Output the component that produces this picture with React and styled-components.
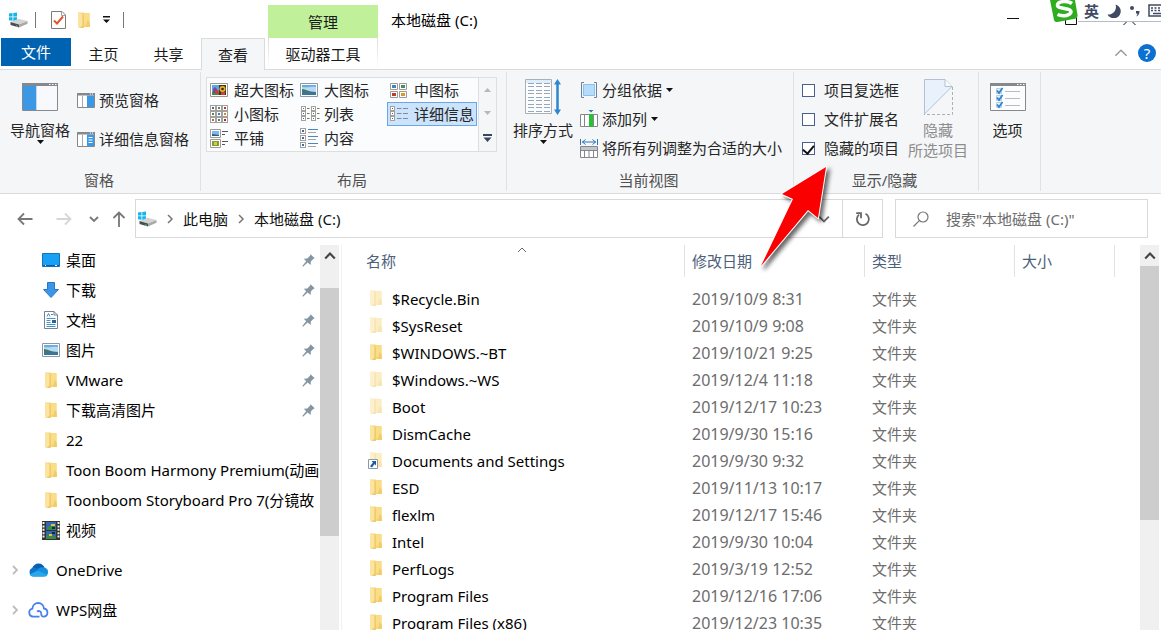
import React from 'react'
import styled, { createGlobalStyle, css } from 'styled-components'

const GlobalStyle = createGlobalStyle`
  * {
    box-sizing: border-box;
  }

  body {
    margin: 0;
    background: #fff;
    color: #1a1a1a;
    font-family: 'Noto Sans', 'Noto Sans CJK SC', sans-serif;
    font-size: 15px;
    line-height: 20px;
  }

  button,
  input {
    font: inherit;
    color: inherit;
  }

  button {
    margin: 0;
    padding: 0;
    border: none;
    background: none;
    white-space: nowrap;
  }

  svg {
    display: block;
    flex: none;
  }
`

const Explorer = styled.div`
  position: relative;
  display: flex;
  flex-direction: column;
  height: 100vh;
  overflow: hidden;
`

/* ---------- title bar ---------- */

const TitleBar = styled.header`
  display: flex;
  align-items: flex-end;
  height: 38px;
`

const QuickAccess = styled.div`
  display: flex;
  align-items: center;
  width: 268px;
  height: 36px;
  padding-left: 8px;
`

const QuickButton = styled.button`
  display: flex;
  margin-left: ${(p) => p.$gap || 12}px;
`

const QuickDivider = styled.div`
  width: 1px;
  height: 16px;
  margin-left: ${(p) => p.$gap || 12}px;
  background: #777;
`

const ContextLabel = styled.div`
  width: 110px;
  height: 33px;
  line-height: 34px;
  text-align: center;
  background: #c0f09a;
`

const WindowTitle = styled.h1`
  flex: 1;
  margin: 0;
  padding-left: 13px;
  font-size: 15px;
  font-weight: normal;
  line-height: 36px;
  color: #000;
`

const WindowButtons = styled.div`
  display: flex;
  align-items: center;
  gap: 46px;
  height: 38px;
  padding-right: 25px;
`

/* ---------- ribbon tabs ---------- */

const TabRow = styled.nav`
  display: flex;
  align-items: stretch;
  height: 32px;
  padding-left: 1px;
  border-bottom: 1px solid #dadbdc;
`

const Tab = styled.button`
  width: ${(p) => p.$width || 65}px;
  height: 31px;
  line-height: 30px;

  ${(p) =>
    p.$file &&
    css`
      height: 28px;
      line-height: 28px;
      color: #fff;
      background: #0063b1;
    `}

  ${(p) =>
    p.$active &&
    css`
      height: 32px;
      border: 1px solid #dadbdc;
      border-bottom: none;
      line-height: 28px;
      background: #f4f6f8;
    `}

  ${(p) =>
    p.$context &&
    css`
      margin-left: 3px;
      border: 1px solid;
      border-width: 0 1px;
      border-image: linear-gradient(#dadbdc, #fff) 1;
    `}
`

const TabTools = styled.div`
  display: flex;
  align-items: center;
  gap: 10px;
  height: 30px;
  margin-left: auto;
  padding-right: 5px;
`

const HelpButton = styled.button`
  width: 18px;
  height: 18px;
  border-radius: 50%;
  background: #0b70cf;
  color: #fff;
  line-height: 18px;
`

/* ---------- ribbon ---------- */

const Ribbon = styled.section`
  display: flex;
  height: 124px;
  padding: 2px 0 2px 1px;
  background: #f4f6f8;
  border-bottom: 1px solid #dadbdc;
`

const Group = styled.div`
  display: flex;
  flex-direction: column;
  width: ${(p) => p.$width}px;
  border-right: 1px solid #dfe1e3;
`

const GroupBody = styled.div`
  display: flex;
  flex: 1;
  padding: ${(p) => p.$pad || '0'};
`

const GroupLabel = styled.div`
  height: 20px;
  margin-bottom: 1px;
  padding-right: 3px;
  color: #505050;
  text-align: center;
`

const BigButton = styled.button`
  display: flex;
  flex-direction: column;
  align-items: center;
  width: ${(p) => p.$width}px;
  padding-top: 7px;
  line-height: 20px;
  color: ${(p) => (p.disabled ? '#8d8d8d' : '#262626')};
`

const BigIcon = styled.span`
  height: 41px;
  padding-top: ${(p) => (p.$tall ? 0 : 4)}px;
`

const SmallStack = styled.div`
  display: flex;
  flex-direction: column;
  gap: ${(p) => p.$gap}px;
  padding: ${(p) => p.$top}px 0 0 2px;
`

const SmallButton = styled.button`
  display: flex;
  align-items: center;
  gap: 4px;
  height: 20px;
  color: #262626;
`

const Gallery = styled.div`
  display: flex;
  height: 75px;
  border: 1px solid #dcdfe2;
  background: #fafcfe;
`

const GalleryGrid = styled.div`
  display: grid;
  grid-template-columns: repeat(3, 90px);
  grid-template-rows: repeat(3, 24px);
`

const GalleryItem = styled.button`
  display: flex;
  align-items: center;
  padding-left: 2px;
  color: #262626;
  border: 1px solid transparent;

  ${(p) =>
    p.$active &&
    css`
      background: #cbe3fb;
      border-color: #6da6e8;
    `}
`

const GalleryIcon = styled.span`
  width: 24px;
`

const GalleryScroll = styled.div`
  display: flex;
  flex-direction: column;
  justify-content: space-around;
  align-items: center;
  width: 18px;
  margin-left: 1px;
  border-left: 1px solid #dcdfe2;
  background: #f4f6f8;
`

const CheckStack = styled.div`
  display: flex;
  flex-direction: column;
  gap: 9px;
  width: 98px;
  padding-top: 8px;
  white-space: nowrap;
`

const CheckLabel = styled.label`
  display: flex;
  align-items: center;
  gap: 9px;
  height: 20px;
  color: #262626;
`

const Checkbox = styled.input`
  appearance: none;
  display: flex;
  justify-content: center;
  width: 13px;
  height: 13px;
  margin: 0;
  border: 1px solid #4a5f8c;
  background: #fff;

  &:checked::after {
    content: '';
    width: 5px;
    height: 9px;
    border: solid #111;
    border-width: 0 2px 2px 0;
    transform: rotate(40deg);
  }
`

/* ---------- address bar ---------- */

const AddressRow = styled.div`
  display: flex;
  align-items: center;
  padding: 5px 13px 7px 17px;
`

const NavButtons = styled.div`
  display: flex;
  align-items: center;
  width: 118px;
`

const NavButton = styled.button`
  display: flex;
  margin-right: ${(p) => p.$gap || 0}px;
`

const AddressBox = styled.div`
  display: flex;
  align-items: center;
  flex: 1;
  height: 39px;
  padding-left: 1px;
  border: 1px solid #d9d9d9;
`

const Crumb = styled.button`
  height: 22px;
  line-height: 20px;
  color: #111;
`

const CrumbArrow = styled.span`
  display: flex;
  justify-content: center;
  width: 26px;
`

const AddressEnd = styled.div`
  display: flex;
  align-items: center;
  align-self: stretch;
  margin-left: auto;
`

const RefreshButton = styled.button`
  display: flex;
  align-items: center;
  justify-content: center;
  align-self: stretch;
  width: 40px;
  margin-left: 12px;
  border-left: 1px solid #d9d9d9;
`

const SearchBox = styled.label`
  display: flex;
  align-items: center;
  gap: 17px;
  width: 253px;
  height: 39px;
  margin-left: 12px;
  padding-left: 17px;
  border: 1px solid #d9d9d9;
`

const SearchInput = styled.input`
  flex: 1;
  min-width: 0;
  padding: 0;
  border: none;
  outline: none;
  background: none;

  &::placeholder {
    color: #6d6d6d;
    opacity: 1;
  }
`

/* ---------- panes ---------- */

const Panes = styled.main`
  display: flex;
  flex: 1;
  min-height: 0;
  padding-right: 2px;
`

const Sidebar = styled.nav`
  width: 320px;
  overflow: hidden;
`

const SideItem = styled.a`
  display: flex;
  align-items: center;
  height: 30px;
  padding-left: ${(p) => (p.$root ? 10 : 41)}px;
  margin-top: ${(p) => (p.$root ? 10 : 0)}px;
  color: #000;
  text-decoration: none;
  white-space: nowrap;
`

const SideIcon = styled.span`
  display: flex;
  justify-content: center;
  flex: none;
  width: ${(p) => p.$width || 20}px;
  margin-right: 5px;
`

const SideText = styled.span`
  flex: 1;
`

const PinSlot = styled.span`
  width: 18px;
`

const ScrollTrack = styled.div`
  display: flex;
  flex-direction: column;
  flex: none;
  width: 19px;
  background: #f0f0f0;
`

const ScrollUp = styled.button`
  display: flex;
  align-items: center;
  justify-content: center;
  height: 21px;
`

const ScrollThumb = styled.div`
  height: ${(p) => p.$size}px;
  margin-top: ${(p) => p.$start}px;
  background: #cdcdcd;
`

const FilePane = styled.section`
  flex: 1;
  min-width: 0;
  overflow: hidden;
  margin-left: 2px;
  border-left: 1px solid #f2f2f2;
`

const FileTable = styled.table`
  width: 100%;
  table-layout: fixed;
  border-collapse: collapse;
`

const HeadCell = styled.th`
  position: relative;
  width: ${(p) => (p.$width ? p.$width + 'px' : 'auto')};
  padding: 0 0 8px;
  font-weight: normal;
  text-align: left;
  color: #4c607a;
`

const HeadText = styled.div`
  height: 32px;
  padding-left: ${(p) => p.$indent || 7}px;
  line-height: 33px;
  border-right: 1px solid #e2e2e2;
`

const SortMark = styled.span`
  position: absolute;
  top: 0;
  left: 51%;
`

const Cell = styled.td`
  height: 27px;
  padding: 0 0 0 7px;
  color: #6d6d6d;
  white-space: nowrap;
`

const DateCell = styled(Cell)`
  font-size: 16px;
`

const FileName = styled.div`
  display: flex;
  align-items: center;
  gap: 10px;
  padding-left: 21px;
  color: #000;
`

/* ---------- overlays ---------- */

const ImeBar = styled.div`
  position: absolute;
  top: 0;
  right: 0;
  display: flex;
  align-items: center;
  width: 83px;
  height: 22px;
  padding-left: 6px;
  gap: 8px;
  background: #fff;
  border-bottom: 1px solid #b4bcc8;
  color: #3f4963;
  font-weight: bold;
  overflow: hidden;
`

const ImeLogo = styled.div`
  position: absolute;
  top: 0;
  right: 83px;
`

const Pointer = styled.svg`
  position: absolute;
  top: 160px;
  left: 750px;
  overflow: visible;
  pointer-events: none;
  filter: drop-shadow(3px 3px 2px rgba(0, 0, 0, 0.6));
`

/* ---------- icons ---------- */

const Chevron = ({ dir = 'down', size = 10, color = '#555', width = 1.5 }) => {
  const paths = {
    down: 'M1 3 L5 7 L9 3',
    up: 'M1 7 L5 3 L9 7',
    right: 'M3 1 L7 5 L3 9',
  }
  return (
    <svg width={size} height={size} viewBox="0 0 10 10" fill="none">
      <path d={paths[dir]} stroke={color} strokeWidth={width} />
    </svg>
  )
}

const Caret = ({ color = '#111', up }) => (
  <svg width="7" height="4" viewBox="0 0 7 4">
    <path d={up ? 'M0 4H7L3.5 0z' : 'M0 0H7L3.5 4z'} fill={color} />
  </svg>
)

const DriveIcon = () => (
  <svg width="20" height="16" viewBox="0 0 20 16">
    <path d="M1 1.500l3.500-.5v3.500H1zM5.300.9L9 .4v4.100H5.300zM1 5.300h3.500v3.500L1 8.300zM5.300 5.300H9v4.100l-3.700-.5z" fill="#13b5ea" />
    <path d="M2.500 10l8-3.200 9 2.200-8.500 3.600z" fill="#d4d4d4" />
    <path d="M2.500 10l8.500 2.600v3L2.500 13z" fill="#4a4e50" />
    <path d="M11 12.600L19.500 9v2.800L11 15.600z" fill="#a9a9a9" />
    <path d="M8 13.300l2 .6v.9l-2-.6z" fill="#5fd26a" />
  </svg>
)

const CheckDocIcon = () => (
  <svg width="15" height="18" viewBox="0 0 15 18">
    <path d="M.5.500H11L14.500 4v13.500H.500z" fill="#fdfdfd" stroke="#7c7c7c" />
    <path d="M10.500.500V4.500h4" fill="none" stroke="#a0a0a0" />
    <path d="M3 9.500l3 3 6-7" fill="none" stroke="#e0552b" strokeWidth="2" />
  </svg>
)

const FolderIcon = ({ faded, link }) => (
  <svg width="12" height="17" viewBox="0 0 12 17" overflow="visible">
    <g opacity={faded ? 0.5 : 1}>
      <path d="M0 .500h5.500l1 .5H11.500v10.500l.5 1v2.500H6v1H2L0 15z" fill="#f6d67c" />
      <path d="M6 1.500h5.500v11H6z" fill="#f9de87" />
      <path d="M0 .500l4.500 1.500v12L2 16 0 15z" fill="#fbe3a0" />
      <path d="M4.500 2L6 2.500v13l-2 .5-2-.5 2.500-2z" fill="#f0ca6c" />
      <path d="M9.500 8l2 2 .5 5H8z" fill="#f4cc66" />
    </g>
    {link && (
      <g>
        <path d="M-1.500 7.500h9v9h-9z" fill="#fff" stroke="#8b98a8" />
        <path d="M1.500 9h4.500v4.500l-1.500-1.500-2.500 3.500-2-1.300 3-3.700z" fill="#1d5a9e" />
      </g>
    )}
  </svg>
)

const QuickMenuIcon = () => (
  <svg width="9" height="8" viewBox="0 0 9 8">
    <path d="M1 0h7v1.500H1zM1 3.500h7L4.500 7z" fill="#111" />
  </svg>
)

// little window with one blue pane, used by the preview and details buttons
const PaneIcon = ({ kind }) => (
  <svg width="18" height="15" viewBox="0 0 18 15">
    <path d="M.5.500h17v14H.500z" fill="#fff" stroke="#85888c" />
    <path d="M0 0h18v2.500H0z" fill="#85888c" />
    <path d="M13 .5h1v1h-1zM15 .5h1v1h-1z" fill="#fff" />
    <path d="M5.500 3v11" stroke="#a6a9ad" />
    <path d="M10 2.500h7V14h-7z" fill="#3c98e4" />
    {kind === 'details' && (
      <path d="M11.500 5.500h4M11.500 8h4M11.500 10.500h4" stroke="#fff" strokeWidth="1" />
    )}
  </svg>
)

const NavPaneIcon = () => (
  <svg width="36" height="28" viewBox="0 0 36 28">
    <path d="M.5.500h35v27H.500z" fill="#f8f9fd" stroke="#85888c" />
    <path d="M0 0h36v3H0z" fill="#85888c" />
    <path d="M27 1h1.500v1H27zM30 1h1.500v1H30zM33 1h1.500v1H33z" fill="#fff" />
    <path d="M1 3h13.500v24H1z" fill="#3c98e4" />
    <path d="M14.500 3v24" stroke="#c5d9ec" />
  </svg>
)

const Thumb = ({ x, y, s = 5, color = '#3c6ea5' }) => (
  <g>
    <rect x={x + 0.5} y={y + 0.5} width={s} height={s} fill="#fff" stroke="#a6a09c" />
    <rect x={x + 2} y={y + 2} width={s - 3} height={s - 3} fill={color} />
  </g>
)

const PictureIcon = () => (
  <svg width="18" height="14" viewBox="0 0 18 14">
    <path d="M.5.500h17v13H.500z" fill="#fff" stroke="#8c98a6" />
    <path d="M2 2h14v10H2z" fill="#b4daf5" />
    <path d="M2 2h14v2c-4-1-8 1-14 0z" fill="#6bacdf" />
    <path d="M2 6c4 0 6 3 14 3v3H2z" fill="#46766b" />
    <path d="M2 10c5-1 9-1 14 0v2H2z" fill="#3c74a0" />
  </svg>
)

const ViewIcon = ({ kind }) => {
  if (kind === 'large') return <PictureIcon />
  if (kind === 'xlarge') {
    return (
      <svg width="18" height="14" viewBox="0 0 18 14">
        <path d="M.5.500h17v13H.500z" fill="#fff" stroke="#9a9490" />
        <path d="M2 2h14v10H2z" fill="#5aa7df" />
        <path d="M9 2h7v10H9z" fill="#44331e" />
        <circle cx="12.500" cy="6" r="3" fill="#e8b62c" />
        <circle cx="12.500" cy="6" r="1.300" fill="#332312" />
        <path d="M2 9h7v3H2z" fill="#3d8f3c" />
        <path d="M3 6l2-2 2 2v4H3z" fill="#7548a4" />
        <path d="M5.500 7h3v4h-3zM11 9h4v3h-4z" fill="#d23b38" />
      </svg>
    )
  }
  if (kind === 'medium') {
    return (
      <svg width="18" height="15" viewBox="0 0 18 15">
        <path d="M.5.500h7v6h-7zM9.500.500h7v6h-7zM.5 8.500h7v6h-7zM9.500 8.500h7v6h-7z" fill="#fff" stroke="#a09a96" />
        <path d="M2 2h4v3H2z" fill="#3a86c8" />
        <path d="M11 2h4v3h-4z" fill="#4b8b57" />
        <path d="M2 10h4v3H2z" fill="#c23a2b" />
        <path d="M11 10h4v3h-4z" fill="#d29a2c" />
      </svg>
    )
  }
  const colors = ['#3c6ea5', '#4b8b57', '#b5382c', '#39916b', '#3b7fc4', '#d08a2a', '#b1742d', '#4b8b57', '#a03030']
  if (kind === 'small') {
    return (
      <svg width="18" height="18" viewBox="0 0 18 18">
        {colors.map((c, i) => (
          <Thumb key={i} x={(i % 3) * 6} y={Math.floor(i / 3) * 6} color={c} />
        ))}
      </svg>
    )
  }
  if (kind === 'list') {
    return (
      <svg width="20" height="16" viewBox="0 0 20 16">
        {[0, 5, 10].map((y) => (
          <g key={y}>
            <Thumb x={1} y={y} s={4} />
            <Thumb x={11} y={y} s={4} color="#4b8b57" />
            <path d={`M7 ${y + 2.5}h2.500M17 ${y + 2.5}h2.500`} stroke="#777" />
          </g>
        ))}
      </svg>
    )
  }
  if (kind === 'details') {
    return (
      <svg width="18" height="16" viewBox="0 0 18 16">
        {[0, 5, 10].map((y) => (
          <g key={y}>
            <Thumb x={0} y={y} s={4} />
            <path d={`M7 ${y + 2.5}h4.500M13 ${y + 2.5}h5`} stroke="#7d8ba0" />
          </g>
        ))}
      </svg>
    )
  }
  if (kind === 'tiles') {
    return (
      <svg width="18" height="19" viewBox="0 0 18 19">
        <path d="M.5.500h10v8H.500zM.5 10.500h10v8H.500z" fill="#fff" stroke="#a09a96" />
        <path d="M2 2h7v5H2z" fill="#7cb9ea" />
        <path d="M2 5l7 1v1H2z" fill="#2c5d84" />
        <path d="M2 12h7v5H2z" fill="#7d9c3b" />
        <path d="M4 13h3v3H4z" fill="#e0c640" />
        <path d="M12 2.500h6M12 5.500h3M12 12.500h6M12 15.500h3" stroke="#555" />
      </svg>
    )
  }
  return (
    <svg width="18" height="20" viewBox="0 0 18 20">
      {[0, 7, 14].map((y) => (
        <g key={y}>
          <Thumb x={0} y={y} s={5} />
          <path d={`M8 ${y + 1.5}h10`} stroke="#4f84c4" />
          <path d={`M8 ${y + 4.5}h8`} stroke="#a5a5a5" />
        </g>
      ))}
    </svg>
  )
}

const SortIcon = () => (
  <svg width="36" height="36" viewBox="0 0 36 36">
    <path d="M.5.500h26v34H.500z" fill="#fdfdfe" stroke="#a8b0b8" />
    <path d="M1 1h25v3H1z" fill="#dfeefa" />
    {[4.5, 7.5, 11.5, 14.5, 18.5, 21.5, 25.5, 28.5, 32.5].map((y, i) => (
      <path key={y} d={`M3 ${y}h6M11 ${y}h6M19 ${y}h6`} stroke={i % 2 ? '#9aa6b4' : '#8fa8c6'} />
    ))}
    <path d="M32.500 3v30" stroke="#2e86d0" strokeWidth="2.500" />
    <path d="M29 5.500L32.500 0 36 5.500zM29 30.500L32.500 36l3.500-5.500z" fill="#2e86d0" />
  </svg>
)

const GroupByIcon = () => (
  <svg width="18" height="16" viewBox="0 0 18 16">
    <path d="M4 .5H1.500v15H4M14 .5h2.500v15H14" fill="none" stroke="#6b7f96" />
    <path d="M3.500 2.500h11v11h-11z" fill="#b5dcfb" stroke="#8cc0ec" />
  </svg>
)

const AddColumnIcon = () => (
  <svg width="18" height="18" viewBox="0 0 18 18">
    <path d="M8.500 0h5l-2.500 2.500z" fill="#2e74b5" />
    <path d="M.5 4.500h17v12H.500z" fill="#fff" stroke="#84888c" />
    <path d="M4.500 4v13M13.500 4v13" stroke="#84888c" />
    <path d="M9 4h4v13H9z" fill="#27c233" />
  </svg>
)

const FitColumnsIcon = () => (
  <svg width="18" height="19" viewBox="0 0 18 19">
    <path d="M.5 0v6M17.500 0v6M2 3h14" stroke="#2e74b5" fill="none" />
    <path d="M5.500.500L2.500 3l3 2.500M12.500.500l3 2.500-3 2.500" stroke="#2e74b5" fill="none" />
    <path d="M.5 7.500h17v11H.500z" fill="#fff" stroke="#84888c" />
    <path d="M1 8h16v3H1z" fill="#c3c6c9" />
    <path d="M0 11.500h18M4.500 11v7M9 11v7M13.500 11v7" stroke="#84888c" />
  </svg>
)

const HideIcon = () => (
  <svg width="29" height="36" viewBox="0 0 29 36">
    <path d="M.5.500H21l7 7L.500 35z" fill="#e9f2fc" />
    <path d="M.5 35V.500H21l7 7L.500 35" fill="none" stroke="#b4bfd0" />
    <path d="M21 .5v7h7" fill="#f8fbff" stroke="#b4bfd0" />
    <path d="M28.500 8v27.500H0" fill="none" stroke="#a9b0ba" strokeDasharray="3 2" />
  </svg>
)

const OptionsIcon = () => (
  <svg width="36" height="28" viewBox="0 0 36 28">
    <path d="M.5.500h35v27H.500z" fill="#fcfdfe" stroke="#85888c" />
    <path d="M0 0h36v3H0z" fill="#85888c" />
    <path d="M27 1h1.500v1H27zM30 1h1.500v1H30zM33 1h1.500v1H33z" fill="#fff" />
    {[5, 12, 19].map((y) => (
      <g key={y}>
        <path d={`M6.500 ${y + 0.5}h5v5h-5z`} fill="#e4f1fb" stroke="#b9cfe2" />
        <path d={`M7 ${y + 2.5}l2 2.500 3.500-5`} fill="none" stroke="#2e86d0" strokeWidth="1.800" />
        <path d={`M15 ${y + 3.5}h15`} stroke="#b9bcc0" />
      </g>
    ))}
  </svg>
)

const ArrowIcon = ({ dir, color }) => (
  <svg width="16" height="16" viewBox="0 0 16 16" fill="none" stroke={color} strokeWidth="1.800">
    {dir === 'left' && <path d="M15.500 8H1.500M7 2.500L1.500 8 7 13.500" />}
    {dir === 'right' && <path d="M.5 8h14M9 2.500L14.500 8 9 13.500" />}
    {dir === 'up' && <path d="M8 16V1.500M2.500 7L8 1.500 13.500 7" />}
  </svg>
)

const RefreshIcon = () => (
  <svg width="16" height="16" viewBox="0 0 16 16">
    <path d="M10.500 2.800A6 6 0 1 1 4 3.600" fill="none" stroke="#666" strokeWidth="1.800" />
    <path d="M1.200 2.200H6v5" fill="none" stroke="#666" strokeWidth="1.800" />
  </svg>
)

const SearchIcon = () => (
  <svg width="16" height="16" viewBox="0 0 16 16" fill="none" stroke="#777" strokeWidth="1.200">
    <circle cx="10" cy="6" r="5" />
    <path d="M6.300 9.700L.500 15.500" />
  </svg>
)

const PinIcon = () => (
  <svg width="13" height="13" viewBox="0 0 13 13">
    <path d="M8.500.300L12.700 4.300 11.300 5 8.800 7.600 8.700 11 5.600 8.600 1 12.700.300 12 4.200 7.300 1.800 4.700 5.300 4.400 8 1.700z" fill="#8595a2" />
  </svg>
)

const DesktopIcon = () => (
  <svg width="18" height="14" viewBox="0 0 18 14">
    <path d="M.5.500h17v13H.500z" fill="#17a0f5" stroke="#1473b8" />
    <path d="M1 12h16v1H1z" fill="#0b5c9c" />
    <path d="M3 12h1v1H3zM13 12h2v1h-2z" fill="#fff" />
  </svg>
)

const DownloadIcon = () => (
  <svg width="18" height="18" viewBox="0 0 18 18">
    <path d="M5.500 1.500h7v7h4L9 16.500 1.500 8.500h4z" fill="#3a96e8" stroke="#2a78c2" />
  </svg>
)

const DocumentIcon = () => (
  <svg width="16" height="18" viewBox="0 0 16 18">
    <path d="M1.500.500H11l3.500 3.500v13.500h-13z" fill="#fff" stroke="#76828e" />
    <path d="M11 .5V4h3.500" fill="none" stroke="#76828e" />
    <path d="M4 5.500l1.500-3 1.500 3M3.500 7.500h9M3.500 9.500h4M3.500 11.500h4M3.500 13.500h9M3.500 15.500h9M8 3.500h2" fill="none" stroke="#4591c8" />
    <path d="M9 9h4v3H9z" fill="#2c638f" />
  </svg>
)

const VideoIcon = () => (
  <svg width="18" height="19" viewBox="0 0 18 19">
    <path d="M0 0h18v19H0z" fill="#333" />
    <path d="M1.500 1v17M16.500 1v17" stroke="#f2f2f2" strokeWidth="2" strokeDasharray="2 1.400" />
    <path d="M4 1h10v8H4zM4 10h10v8H4z" fill="#3268b4" />
    <path d="M5 7l4-3 5 2v3H6zM4 15l4-2 6 3v2H4z" fill="#3c8a47" />
    <path d="M9 3h4v2H9zM7 13h3v2H7z" fill="#e4c23b" />
    <path d="M10 6h3v2h-3zM10 11h3v2h-3z" fill="#182742" />
  </svg>
)

const OneDriveIcon = () => (
  <svg width="21" height="14" viewBox="0 0 21 14">
    <path d="M4 5.500C5 2.500 7.500.500 10.500.500s5.200 1.700 6 4L14 10 5 8z" fill="#0a5db0" />
    <path d="M5 13.500A4.500 4.500 0 0 1 4.800 4.800C6.500 4 9 5 10 6l6 7.500z" fill="#1173cc" />
    <path d="M9 6.500c3-2.500 6-2.600 8-1.700a4.500 4.500 0 0 1-.7 8.700z" fill="#168fdf" />
    <path d="M1.500 11.500L9.800 7.500l9.500 4.500c-.7 1-1.700 1.500-3 1.500H5c-1.500 0-2.700-.7-3.500-2z" fill="#28a8ea" />
  </svg>
)

const WpsIcon = () => (
  <svg width="21" height="16" viewBox="0 0 21 16" fill="none" stroke="#4a80ea" strokeWidth="1.800">
    <path d="M11.500 14.600H5a4 4 0 0 1-.6-7.900C4.500 3.300 7 1 10.200 1s5.500 2.300 5.700 5.500a4.100 4.100 0 0 1 .1 8.100c-2.200.2-3-1.600-2.700-3.100" />
    <path d="M9 9.500c2-1.200 4.300-.2 4.300 2.300" />
  </svg>
)

/* ---------- data ---------- */

const VIEWS = [
  ['xlarge', '超大图标'],
  ['large', '大图标'],
  ['medium', '中图标'],
  ['small', '小图标'],
  ['list', '列表'],
  ['details', '详细信息'],
  ['tiles', '平铺'],
  ['content', '内容'],
]

const PLACES = [
  { name: '桌面', icon: <DesktopIcon />, pinned: true },
  { name: '下载', icon: <DownloadIcon />, pinned: true },
  { name: '文档', icon: <DocumentIcon />, pinned: true },
  { name: '图片', icon: <PictureIcon />, pinned: true },
  { name: 'VMware', icon: <FolderIcon />, pinned: true },
  { name: '下载高清图片', icon: <FolderIcon />, pinned: true },
  { name: '22', icon: <FolderIcon /> },
  { name: 'Toon Boom Harmony Premium(动画', icon: <FolderIcon /> },
  { name: 'Toonboom Storyboard Pro 7(分镜故', icon: <FolderIcon /> },
  { name: '视频', icon: <VideoIcon /> },
]

const CLOUDS = [
  { name: 'OneDrive', icon: <OneDriveIcon /> },
  { name: 'WPS网盘', icon: <WpsIcon /> },
]

const FILES = [
  { name: '$Recycle.Bin', date: '2019/10/9 8:31', faded: true },
  { name: '$SysReset', date: '2019/10/9 9:08', faded: true },
  { name: '$WINDOWS.~BT', date: '2019/10/21 9:25' },
  { name: '$Windows.~WS', date: '2019/12/4 11:18', faded: true },
  { name: 'Boot', date: '2019/12/17 10:23', faded: true },
  { name: 'DismCache', date: '2019/9/30 15:16' },
  { name: 'Documents and Settings', date: '2019/9/30 9:32', faded: true, link: true },
  { name: 'ESD', date: '2019/11/13 10:17' },
  { name: 'flexlm', date: '2019/12/17 15:46' },
  { name: 'Intel', date: '2019/9/30 10:04' },
  { name: 'PerfLogs', date: '2019/3/19 12:52' },
  { name: 'Program Files', date: '2019/12/16 17:06' },
  { name: 'Program Files (x86)', date: '2019/12/23 10:35' },
]

/* ---------- sections ---------- */

const Title = () => (
  <TitleBar>
    <QuickAccess>
      <DriveIcon />
      <QuickDivider $gap={7} />
      <QuickButton $gap={15} aria-label="属性">
        <CheckDocIcon />
      </QuickButton>
      <QuickButton aria-label="新建文件夹">
        <FolderIcon />
      </QuickButton>
      <QuickButton aria-label="自定义快速访问工具栏">
        <QuickMenuIcon />
      </QuickButton>
      <QuickDivider />
    </QuickAccess>
    <ContextLabel>管理</ContextLabel>
    <WindowTitle>本地磁盘 (C:)</WindowTitle>
    <WindowButtons>
      <button aria-label="最小化">
        <svg width="12" height="12" viewBox="0 0 12 12">
          <path d="M0 5.500h12" stroke="#111" />
        </svg>
      </button>
      <button aria-label="最大化">
        <svg width="12" height="12" viewBox="0 0 12 12">
          <path d="M.5.500h11v11H.500z" fill="none" stroke="#111" />
        </svg>
      </button>
      <button aria-label="关闭">
        <svg width="13" height="12" viewBox="0 0 13 12">
          <path d="M.5 0l12 12M12.500 0L.500 12" stroke="#111" />
        </svg>
      </button>
    </WindowButtons>
  </TitleBar>
)

const Tabs = () => (
  <TabRow>
    <Tab $file $width={70}>
      文件
    </Tab>
    <Tab>主页</Tab>
    <Tab>共享</Tab>
    <Tab $active $width={64}>
      查看
    </Tab>
    <Tab $context $width={110}>
      驱动器工具
    </Tab>
    <TabTools>
      <button aria-label="最小化功能区">
        <Chevron dir="up" size={14} color="#999" width={1} />
      </button>
      <HelpButton aria-label="帮助">?</HelpButton>
    </TabTools>
  </TabRow>
)

const RibbonBar = () => (
  <Ribbon>
    <Group $width={200}>
      <GroupBody $pad="0 0 0 4px">
        <BigButton $width={70}>
          <BigIcon>
            <NavPaneIcon />
          </BigIcon>
          导航窗格
          <Caret />
        </BigButton>
        <SmallStack $gap={19} $top={18}>
          <SmallButton>
            <PaneIcon kind="preview" />
            预览窗格
          </SmallButton>
          <SmallButton>
            <PaneIcon kind="details" />
            详细信息窗格
          </SmallButton>
        </SmallStack>
      </GroupBody>
      <GroupLabel>窗格</GroupLabel>
    </Group>

    <Group $width={306}>
      <GroupBody $pad="5px 0 0 5px">
        <Gallery>
          <GalleryGrid>
            {VIEWS.map(([kind, label]) => (
              <GalleryItem key={kind} $active={kind === 'details'}>
                <GalleryIcon>
                  <ViewIcon kind={kind} />
                </GalleryIcon>
                {label}
              </GalleryItem>
            ))}
          </GalleryGrid>
          <GalleryScroll>
            <button aria-label="上一行">
              <Caret up color="#b5b8bc" />
            </button>
            <button aria-label="下一行">
              <Caret color="#b5b8bc" />
            </button>
            <button aria-label="更多">
              <svg width="9" height="8" viewBox="0 0 9 8">
                <path d="M0 0h9v2H0zM.5 3.500h8L4.500 8z" fill="#36475c" />
              </svg>
            </button>
          </GalleryScroll>
        </Gallery>
      </GroupBody>
      <GroupLabel>布局</GroupLabel>
    </Group>

    <Group $width={287}>
      <GroupBody $pad="0 0 0 1px">
        <BigButton $width={70}>
          <BigIcon $tall>
            <SortIcon />
          </BigIcon>
          排序方式
          <Caret />
        </BigButton>
        <SmallStack $gap={9} $top={8}>
          <SmallButton>
            <GroupByIcon />
            分组依据
            <Caret />
          </SmallButton>
          <SmallButton>
            <AddColumnIcon />
            添加列
            <Caret />
          </SmallButton>
          <SmallButton>
            <FitColumnsIcon />
            将所有列调整为合适的大小
          </SmallButton>
        </SmallStack>
      </GroupBody>
      <GroupLabel>当前视图</GroupLabel>
    </Group>

    <Group $width={185}>
      <GroupBody $pad="0 0 0 8px">
        <CheckStack>
          <CheckLabel>
            <Checkbox type="checkbox" />
            项目复选框
          </CheckLabel>
          <CheckLabel>
            <Checkbox type="checkbox" />
            文件扩展名
          </CheckLabel>
          <CheckLabel>
            <Checkbox type="checkbox" defaultChecked />
            隐藏的项目
          </CheckLabel>
        </CheckStack>
        <BigButton $width={76} disabled>
          <BigIcon $tall>
            <HideIcon />
          </BigIcon>
          隐藏
          <span>所选项目</span>
        </BigButton>
      </GroupBody>
      <GroupLabel>显示/隐藏</GroupLabel>
    </Group>

    <Group $width={62}>
      <GroupBody>
        <BigButton $width={57}>
          <BigIcon>
            <OptionsIcon />
          </BigIcon>
          选项
        </BigButton>
      </GroupBody>
    </Group>
  </Ribbon>
)

const AddressBar = () => (
  <AddressRow>
    <NavButtons>
      <NavButton $gap={23} aria-label="返回">
        <ArrowIcon dir="left" color="#777" />
      </NavButton>
      <NavButton $gap={17} aria-label="前进">
        <ArrowIcon dir="right" color="#d6d6d6" />
      </NavButton>
      <NavButton $gap={12} aria-label="最近浏览的位置">
        <Chevron color="#777" width={1.8} />
      </NavButton>
      <NavButton aria-label="上移">
        <ArrowIcon dir="up" color="#777" />
      </NavButton>
    </NavButtons>
    <AddressBox>
      <DriveIcon />
      <CrumbArrow>
        <Chevron dir="right" color="#777" />
      </CrumbArrow>
      <Crumb>此电脑</Crumb>
      <CrumbArrow>
        <Chevron dir="right" color="#777" />
      </CrumbArrow>
      <Crumb>本地磁盘 (C:)</Crumb>
      <AddressEnd>
        <button aria-label="以前的位置">
          <Chevron size={12} color="#666" />
        </button>
        <RefreshButton aria-label="刷新">
          <RefreshIcon />
        </RefreshButton>
      </AddressEnd>
    </AddressBox>
    <SearchBox>
      <SearchIcon />
      <SearchInput type="text" placeholder={'搜索"本地磁盘 (C:)"'} />
    </SearchBox>
  </AddressRow>
)

const Scrollbar = ({ start, size }) => (
  <ScrollTrack>
    <ScrollUp aria-label="向上滚动">
      <Chevron dir="up" size={12} color="#444" width={1.8} />
    </ScrollUp>
    <ScrollThumb $start={start} $size={size} />
  </ScrollTrack>
)

const Places = () => (
  <Sidebar>
    {PLACES.map((place) => (
      <SideItem key={place.name} href="#">
        <SideIcon>{place.icon}</SideIcon>
        <SideText>{place.name}</SideText>
        {place.pinned && (
          <PinSlot>
            <PinIcon />
          </PinSlot>
        )}
      </SideItem>
    ))}
    {CLOUDS.map((cloud) => (
      <SideItem key={cloud.name} $root href="#">
        <SideIcon $width={10}>
          <Chevron dir="right" color="#bdbdbd" width={1.8} />
        </SideIcon>
        <SideIcon $width={26}>
          {cloud.icon}
        </SideIcon>
        <SideText>{cloud.name}</SideText>
      </SideItem>
    ))}
  </Sidebar>
)

const Files = () => (
  <FilePane>
    <FileTable>
      <thead>
        <tr>
          <HeadCell $width={343}>
            <HeadText $indent={24}>名称</HeadText>
            <SortMark>
              <Chevron dir="up" size={10} color="#666" width={1} />
            </SortMark>
          </HeadCell>
          <HeadCell $width={180}>
            <HeadText>修改日期</HeadText>
          </HeadCell>
          <HeadCell $width={150}>
            <HeadText>类型</HeadText>
          </HeadCell>
          <HeadCell $width={100}>
            <HeadText>大小</HeadText>
          </HeadCell>
          <HeadCell />
        </tr>
      </thead>
      <tbody>
        {FILES.map((file) => (
          <tr key={file.name}>
            <Cell>
              <FileName>
                <FolderIcon faded={file.faded} link={file.link} />
                {file.name}
              </FileName>
            </Cell>
            <DateCell>{file.date}</DateCell>
            <Cell>文件夹</Cell>
            <Cell />
            <Cell />
          </tr>
        ))}
      </tbody>
    </FileTable>
  </FilePane>
)

const Ime = () => (
  <>
    <ImeBar>
      英
      <svg width="14" height="14" viewBox="0 0 14 14">
        <path d="M8.500 0.500a7 7 0 1 1-8 10A7.500 7.500 0 0 0 8.500.500z" fill="#3f4963" />
      </svg>
      <svg width="11" height="12" viewBox="0 0 11 12">
        <circle cx="3" cy="3" r="2" fill="#3f4963" />
        <path d="M7 6h3.500c0 3-1 4.500-3.500 5.500 1-1 1.500-2 1.300-3H7z" fill="#3f4963" />
      </svg>
      <svg width="18" height="13" viewBox="0 0 18 13" fill="none" stroke="#3f4963" strokeWidth="1.500">
        <path d="M1 1h16v11H1z" />
        <path d="M3 4h12M3 6.500h12" strokeDasharray="2 1.500" />
        <path d="M5 9.500h8" />
      </svg>
    </ImeBar>
    <ImeLogo>
      <svg width="28" height="22" viewBox="0 0 28 22">
        <path d="M0 0h25l2.500 15c.3 2-.5 3.200-2.500 3.700L7.500 22C5.500 22.200 4.500 21.500 4 20z" fill="#2eae1e" />
        <path d="M22 3.500C18 .5 8 1 7.500 5c-.5 4.500 13.500 2.500 13.500 6.500 0 4-8 5.500-13.500 3" fill="none" stroke="#fff" strokeWidth="3.500" />
      </svg>
    </ImeLogo>
  </>
)

const App = () => {
  return (
    <Explorer>
      <GlobalStyle />
      <Title />
      <Tabs />
      <RibbonBar />
      <AddressBar />
      <Panes>
        <Places />
        <Scrollbar start={22} size={248} />
        <Files />
        <Scrollbar start={0} size={254} />
      </Panes>
      <Ime />
      <Pointer width="90" height="120" viewBox="0 0 90 120">
        <path
          d="M76 7L32 34l11 5-32 67 47-56 10 8z"
          fill="#fb0000"
          stroke="#fff"
          strokeWidth="2"
          paintOrder="stroke"
        />
      </Pointer>
    </Explorer>
  )
}

export default App
